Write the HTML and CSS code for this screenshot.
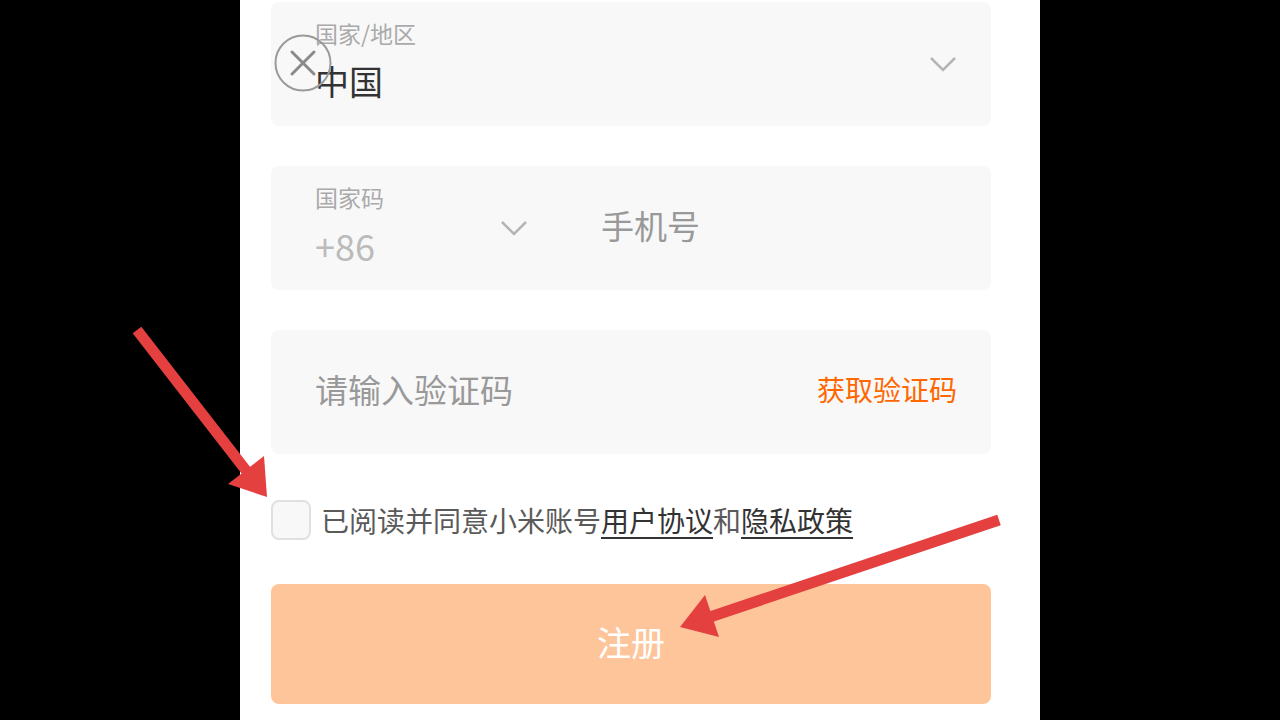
FILE: index.html
```html
<!DOCTYPE html>
<html lang="zh-CN">
<head>
    <meta charset="UTF-8">
    <meta name="viewport" content="width=device-width, initial-scale=1.0">
    <title>小米账号 - 注册</title>
    <link rel="stylesheet" href="styles.css">
</head>
<body>
    <div class="screen">
        <!-- Close button -->
        <button class="close" aria-label="关闭">
            <svg width="58" height="58" viewBox="0 0 58 58">
                <circle cx="29" cy="29" r="27.5" fill="none" stroke="#9a9a9a" stroke-width="2"/>
                <path d="M18 18 L40 40 M40 18 L18 40" stroke="#8a8a8a" stroke-width="3" stroke-linecap="round"/>
            </svg>
        </button>

        <!-- Country / region -->
        <div class="field">
            <div class="field-col grow">
                <div class="field-label">国家/地区</div>
                <div class="field-value">中国</div>
            </div>
            <svg class="chevron" width="28" height="16" viewBox="0 0 28 16">
                <polyline points="2,2 14,14 26,2" fill="none" stroke="#b5b5b5" stroke-width="2.5"/>
            </svg>
        </div>

        <!-- Country code + phone -->
        <div class="field">
            <div class="field-col code-col">
                <div class="field-label">国家码</div>
                <div class="field-value code-value">+86</div>
            </div>
            <svg class="chevron" width="28" height="16" viewBox="0 0 28 16">
                <polyline points="2,2 14,14 26,2" fill="none" stroke="#b5b5b5" stroke-width="2.5"/>
            </svg>
            <div class="placeholder phone">手机号</div>
        </div>

        <!-- Verify code -->
        <div class="field last">
            <div class="placeholder grow">请输入验证码</div>
            <a class="get-code" href="#">获取验证码</a>
        </div>

        <!-- Agreement -->
        <div class="agree">
            <span class="checkbox"></span>
            <span class="agree-text">已阅读并同意小米账号<a href="#">用户协议</a>和<a href="#">隐私政策</a></span>
        </div>

        <button class="submit">注册</button>
    </div>

    <!-- Annotation arrows -->
    <svg class="arrows" width="1280" height="720" viewBox="0 0 1280 720">
        <line x1="137" y1="330" x2="248" y2="473" stroke="#e44040" stroke-width="11"/>
        <polygon points="228,484 264,456 267,497" fill="#e44040"/>
        <line x1="999" y1="520" x2="710" y2="617" stroke="#e44040" stroke-width="11"/>
        <polygon points="705,595 719,637 680,627" fill="#e44040"/>
    </svg>
</body>
</html>
```

FILE: styles.css
```css
body {
    margin: 0;
    background: #000;
    font-family: "Noto Sans CJK SC", "Noto Sans", sans-serif;
}

.screen {
    position: relative;
    width: 800px;
    height: 720px;
    margin: 0 auto;
    padding: 2px 49px 0 31px;
    box-sizing: border-box;
    background: #fff;
    overflow: hidden;
}

/* Close button over the first field */
.close {
    position: absolute;
    left: 34px;
    top: 34px;
    width: 58px;
    height: 58px;
    padding: 0;
    border: none;
    background: none;
}

.close svg {
    display: block;
}

/* Fields */
.field {
    height: 124px;
    margin-bottom: 40px;
    padding: 0 34px 6px 44px;
    box-sizing: border-box;
    display: flex;
    align-items: center;
    background: #f8f8f8;
    border-radius: 8px;
}

.field.last {
    margin-bottom: 46px;
    padding-right: 34px;
}

.grow {
    flex: 1;
}

.field-col {
    display: flex;
    flex-direction: column;
}

.field-label {
    font-size: 23px;
    line-height: 28px;
    color: #aaa;
}

.field-value {
    margin-top: 12px;
    font-size: 34px;
    line-height: 44px;
    color: #333;
}

.code-col {
    width: 185px;
}

.code-value {
    font-size: 36px;
    color: #bbb;
}

.chevron {
    flex-shrink: 0;
    margin-top: 6px;
}

.placeholder {
    font-size: 33px;
    line-height: 44px;
    color: #999;
}

.phone {
    margin-left: 73px;
    font-size: 33px;
}

.get-code {
    font-size: 28px;
    color: #ff6700;
    text-decoration: none;
}

/* Agreement */
.agree {
    display: flex;
    align-items: center;
    gap: 10px;
    height: 40px;
    margin-bottom: 44px;
}

.checkbox {
    width: 40px;
    height: 40px;
    box-sizing: border-box;
    border: 2px solid #e0e0e0;
    border-radius: 8px;
    background: #f8f8f8;
}

.agree-text {
    font-size: 28px;
    line-height: 40px;
    color: #5a5a5a;
}

.agree-text a {
    color: #333;
    text-decoration: underline;
    text-underline-offset: 5px;
    text-decoration-thickness: 2px;
}

.submit {
    display: flex;
    align-items: center;
    justify-content: center;
    width: 100%;
    height: 120px;
    padding: 0 0 6px;
    border: none;
    border-radius: 8px;
    background: #fec59b;
    color: #fff;
    font-family: inherit;
    font-size: 34px;
}

/* Annotation overlay */
.arrows {
    position: absolute;
    left: 0;
    top: 0;
    pointer-events: none;
}
```
